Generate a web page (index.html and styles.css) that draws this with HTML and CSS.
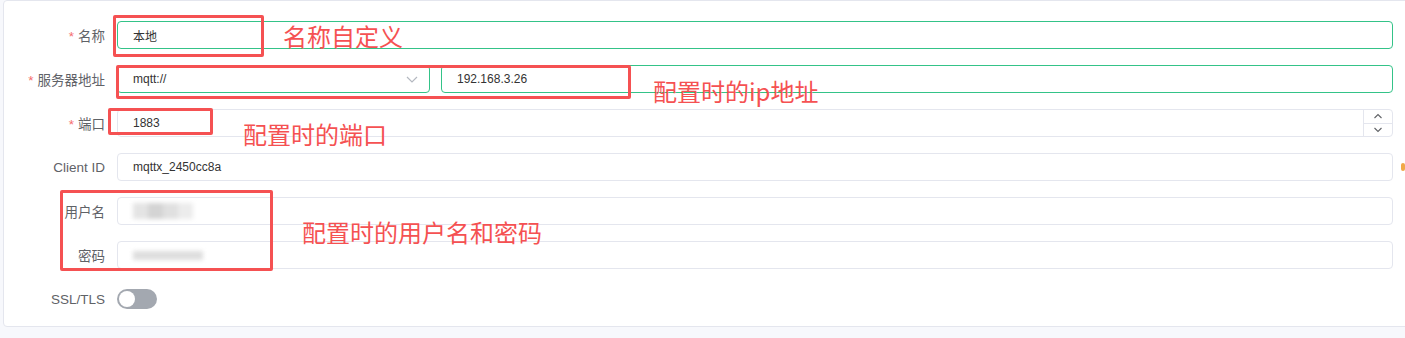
FILE: index.html
```html
<!DOCTYPE html>
<html lang="zh-CN">
<head>
    <meta charset="UTF-8">
    <meta name="viewport" content="width=device-width, initial-scale=1.0">
    <title>连接配置</title>
    <link rel="stylesheet" href="styles.css">
</head>
<body>
    <div class="card">
        <form class="conn-form">
            <div class="form-item">
                <label class="form-label"><span class="star">*</span>名称</label>
                <div class="form-control">
                    <div class="input active">本地</div>
                </div>
            </div>
            <div class="form-item">
                <label class="form-label"><span class="star">*</span>服务器地址</label>
                <div class="form-control split">
                    <div class="input active select">
                        <span>mqtt://</span>
                        <svg class="arrow" width="14" height="14" viewBox="0 0 14 14"><path d="M2 5 L7 10 L12 5" fill="none" stroke="#b4b8c0" stroke-width="1.2"/></svg>
                    </div>
                    <div class="input active grow">192.168.3.26</div>
                </div>
            </div>
            <div class="form-item">
                <label class="form-label"><span class="star">*</span>端口</label>
                <div class="form-control">
                    <div class="input number">
                        <span>1883</span>
                        <div class="spinner">
                            <div class="spin-btn"><svg width="10" height="8" viewBox="0 0 10 8"><path d="M1.5 6 L5 2.5 L8.5 6" fill="none" stroke="#606266" stroke-width="1.1"/></svg></div>
                            <div class="spin-btn"><svg width="10" height="8" viewBox="0 0 10 8"><path d="M1.5 2 L5 5.5 L8.5 2" fill="none" stroke="#606266" stroke-width="1.1"/></svg></div>
                        </div>
                    </div>
                </div>
            </div>
            <div class="form-item">
                <label class="form-label">Client ID</label>
                <div class="form-control">
                    <div class="input">mqttx_2450cc8a</div>
                    <span class="refresh-dot"></span>
                </div>
            </div>
            <div class="form-item">
                <label class="form-label">用户名</label>
                <div class="form-control">
                    <div class="input"><span class="blur user-blur"></span></div>
                </div>
            </div>
            <div class="form-item">
                <label class="form-label">密码</label>
                <div class="form-control">
                    <div class="input"><span class="blur pass-blur"></span></div>
                </div>
            </div>
            <div class="form-item">
                <label class="form-label">SSL/TLS</label>
                <div class="form-control">
                    <span class="switch"><span class="knob"></span></span>
                </div>
            </div>
        </form>
    </div>

    <!-- annotations drawn over the screenshot -->
    <div class="mark mark-name"></div>
    <div class="mark mark-host"></div>
    <div class="mark mark-port"></div>
    <div class="mark mark-auth"></div>
    <div class="note note-name">名称自定义</div>
    <div class="note note-host">配置时的ip地址</div>
    <div class="note note-port">配置时的端口</div>
    <div class="note note-auth">配置时的用户名和密码</div>
</body>
</html>
```

FILE: styles.css
```css
body {
    margin: 0;
    background-color: #f7f8fc;
    font-family: "Liberation Sans", "Noto Sans CJK SC", sans-serif;
    overflow: hidden;
    height: 338px;
    position: relative;
}
.card {
    margin-left: 3px;
    width: 1430px;
    height: 327px;
    box-sizing: border-box;
    background-color: white;
    border: 1px solid #e4e6ee;
    border-radius: 4px;
    padding-top: 20px;
}
.form-item {
    display: flex;
    align-items: center;
    height: 28px;
    margin-bottom: 16px;
}
.form-label {
    width: 101px;
    padding-right: 12px;
    text-align: right;
    font-size: 13.5px;
    color: #5f6267;
    font-family: "Liberation Sans", "Noto Sans CJK SC", sans-serif;
}
.star {
    color: #f56c6c;
    margin-right: 4px;
}
.form-control {
    width: 1276px;
    display: flex;
    align-items: center;
    position: relative;
}
.split {
    gap: 11px;
}
.input {
    flex: 1;
    height: 28px;
    box-sizing: border-box;
    border: 1px solid #e4e6ee;
    border-radius: 4px;
    padding: 0 15px;
    display: flex;
    align-items: center;
    font-size: 12px;
    color: #333;
}
.input.active {
    border-color: #34c388;
}
.select {
    flex: none;
    width: 313px;
    justify-content: space-between;
    padding-right: 10px;
}
.grow {
    flex: 1;
}
.number {
    padding-right: 0;
    justify-content: space-between;
}
.spinner {
    width: 28px;
    height: 26px;
    border-left: 1px solid #e4e6ee;
    display: flex;
    flex-direction: column;
}
.spin-btn {
    flex: 1;
    display: flex;
    align-items: center;
    justify-content: center;
}
.spin-btn + .spin-btn {
    border-top: 1px solid #e4e6ee;
}
.refresh-dot {
    position: absolute;
    right: -12px;
    top: 10px;
    width: 4px;
    height: 8px;
    border-radius: 2px;
    background-color: #f0a848;
}
.blur {
    display: block;
    background-color: #d8d8d8;
    filter: blur(2px);
}
.user-blur {
    width: 60px;
    height: 16px;
    background: linear-gradient(90deg, #e4e4e4 0 25%, #d4d4d4 25% 50%, #e0e0e0 50% 75%, #ececec 75%);
}
.pass-blur {
    width: 70px;
    height: 9px;
    background-color: #dedede;
}
.switch {
    width: 40px;
    height: 20px;
    border-radius: 10px;
    background-color: #a3a8b0;
    position: relative;
}
.knob {
    position: absolute;
    left: 2px;
    top: 2px;
    width: 16px;
    height: 16px;
    border-radius: 50%;
    background-color: white;
}
.mark {
    position: absolute;
    border: 3px solid #f55152;
    border-radius: 2px;
    box-sizing: border-box;
}
.mark-name {
    left: 113px;
    top: 15px;
    width: 151px;
    height: 42px;
}
.mark-host {
    left: 116px;
    top: 65px;
    width: 515px;
    height: 34px;
}
.mark-port {
    left: 108px;
    top: 108px;
    width: 105px;
    height: 27px;
}
.mark-auth {
    left: 60px;
    top: 190px;
    width: 213px;
    height: 81px;
}
.note {
    position: absolute;
    font-family: "Noto Sans CJK SC", sans-serif;
    font-size: 24px;
    line-height: 24px;
    color: #f55152;
    white-space: nowrap;
}
.note-name {
    left: 283px;
    top: 24px;
}
.note-host {
    left: 653px;
    top: 79px;
}
.note-port {
    left: 243px;
    top: 122px;
}
.note-auth {
    left: 302px;
    top: 220px;
}
```
